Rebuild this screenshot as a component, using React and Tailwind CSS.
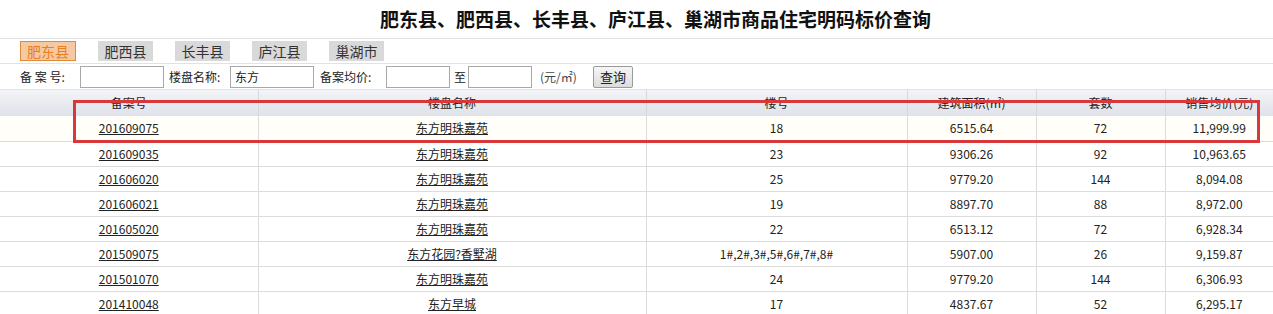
import React from 'react';

const rows = [
    ['201609075', '东方明珠嘉苑', '18', '6515.64', '72', '11,999.99'],
    ['201609035', '东方明珠嘉苑', '23', '9306.26', '92', '10,963.65'],
    ['201606020', '东方明珠嘉苑', '25', '9779.20', '144', '8,094.08'],
    ['201606021', '东方明珠嘉苑', '19', '8897.70', '88', '8,972.00'],
    ['201605020', '东方明珠嘉苑', '22', '6513.12', '72', '6,928.34'],
    ['201509075', '东方花园?香墅湖', '1#,2#,3#,5#,6#,7#,8#', '5907.00', '26', '9,159.87'],
    ['201501070', '东方明珠嘉苑', '24', '9779.20', '144', '6,306.93'],
    ['201410048', '东方早城', '17', '4837.67', '52', '6,295.17'],
];

const tabs = ['肥东县', '肥西县', '长丰县', '庐江县', '巢湖市'];

export default function App() {
    return (
        <div className="relative w-[1273px] h-[314px] overflow-hidden bg-white text-[12px] text-[#222] font-['SimSun','Noto_Sans_CJK_SC',sans-serif]">
            <div className="h-[39px] border-b border-[#e2e2e2] flex items-center justify-center pl-[38px]">
                <h1 className="text-[19px] font-bold text-[#111]">
                    肥东县、肥西县、长丰县、庐江县、巢湖市商品住宅明码标价查询
                </h1>
            </div>

            <div className="h-[25px] border-b border-[#e2e2e2] flex items-center gap-[22px] pl-[20px]">
                {tabs.map((t, i) => (
                    <span
                        key={t}
                        className={
                            i === 0
                                ? 'w-[56px] h-[20px] flex items-center justify-center text-[14px] border border-[#e08a3c] bg-[#f7c9a0] text-[#e57f25]'
                                : 'w-[55px] h-[20px] flex items-center justify-center text-[14px] bg-[#d9d9d9] text-[#333]'
                        }
                    >
                        {t}
                    </span>
                ))}
            </div>

            <div className="h-[26px] border-b border-[#e2e2e2] flex items-center pl-[20px]">
                <span className="w-[60px]">备 案 号:</span>
                <input className="w-[84px] h-[22px] border border-[#a8a8a8] px-1" />
                <span className="ml-[5px] w-[61px]">楼盘名称:</span>
                <input className="w-[84px] h-[22px] border border-[#a8a8a8] px-1" defaultValue="东方" />
                <span className="ml-[6px] w-[66px]">备案均价:</span>
                <input className="w-[64px] h-[22px] border border-[#a8a8a8] px-1" />
                <span className="ml-[4px] w-[14px]">至</span>
                <input className="w-[64px] h-[22px] border border-[#a8a8a8] px-1" />
                <span className="ml-[8px] w-[53px] text-[#444]">(元/㎡)</span>
                <button className="w-[40px] h-[22px] border border-[#9a9a9a] rounded-[2px] bg-gradient-to-b from-[#f6f6f6] to-[#dcdcdc] text-[13px] text-[#222]">
                    查询
                </button>
            </div>

            <table className="table-fixed border-collapse w-[1273px]">
                <colgroup>
                    <col className="w-[258px]" />
                    <col className="w-[388px]" />
                    <col className="w-[261px]" />
                    <col className="w-[129px]" />
                    <col className="w-[129px]" />
                    <col className="w-[108px]" />
                </colgroup>
                <thead>
                    <tr className="h-[26px] bg-gradient-to-b from-[#f3f4f7] to-[#dfe2ea]">
                        {['备案号', '楼盘名称', '楼号', '建筑面积(㎡)', '套数', '销售均价(元)'].map((h) => (
                            <th key={h} className="font-normal text-center border-r border-[#d8d8d8] last:border-r-0 align-middle">
                                {h}
                            </th>
                        ))}
                    </tr>
                </thead>
                <tbody>
                    {rows.map((r, i) => (
                        <tr key={r[0]} className={i === 0 ? 'h-[25px] bg-[#fffef8] border-b border-[#dcdcdc]' : 'h-[25px] border-b border-[#dcdcdc]'}>
                            <td className="text-center border-r border-[#dcdcdc]">
                                <a className="underline text-[#222]">{r[0]}</a>
                            </td>
                            <td className="text-center border-r border-[#dcdcdc]">
                                <a className="underline text-[#222]">{r[1]}</a>
                            </td>
                            <td className="text-center border-r border-[#dcdcdc]">{r[2]}</td>
                            <td className="text-center border-r border-[#dcdcdc]">{r[3]}</td>
                            <td className="text-center border-r border-[#dcdcdc]">{r[4]}</td>
                            <td className="text-center">{r[5]}</td>
                        </tr>
                    ))}
                </tbody>
            </table>

            <div className="absolute left-[73px] top-[100px] w-[1187px] h-[43px] border-[3px] border-[#d9383a] pointer-events-none" />
        </div>
    );
}
